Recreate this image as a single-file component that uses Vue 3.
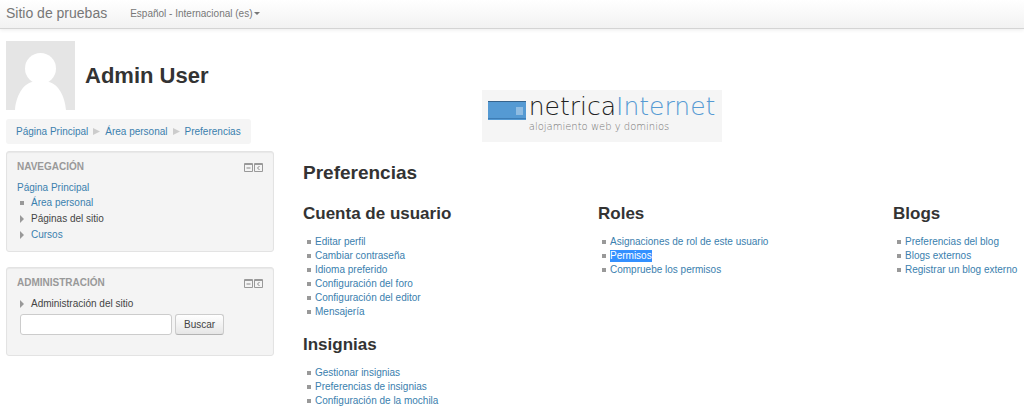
<template>
  <div class="page">
    <header class="navbar">
      <a class="brand" href="#">Sitio de pruebas</a>
      <button type="button" class="lang">Español - Internacional (es) <span class="caret"></span></button>
    </header>

    <div class="content">
      <aside class="sidebar">
        <div class="user">
          <svg class="avatar" viewBox="0 0 69 69" role="img" aria-label="Admin User">
            <rect width="69" height="69" fill="#e5e5e5" />
            <circle cx="34.5" cy="27.5" r="15.5" fill="#fff" />
            <path d="M9 69C10 55 17 43 26 41Q34.500 37 43 41C52 43 59 55 60 69Z" fill="#fff" />
          </svg>
          <h1>Admin User</h1>
        </div>

        <nav class="breadcrumb" aria-label="Ruta">
          <template v-for="(item, index) in breadcrumb" :key="item">
            <svg v-if="index > 0" class="separator" viewBox="0 0 7 7" aria-hidden="true">
              <path d="M0 0L7 3.500L0 7Z" fill="#ccc" />
            </svg>
            <a href="#">{{ item }}</a>
          </template>
        </nav>

        <section v-for="block in blocks" :key="block.title" class="block">
          <div class="block-header">
            <h2>{{ block.title }}</h2>
            <div class="block-actions">
              <button type="button" aria-label="Ocultar bloque">
                <svg viewBox="0 0 9 9">
                  <path d="M0.500 0.500H8.500V8.500H0.500ZM0.500 1.500H8.500" fill="none" stroke="#999" />
                  <path d="M2.500 5H6.500" stroke="#888" />
                </svg>
              </button>
              <button type="button" aria-label="Acoplar bloque">
                <svg viewBox="0 0 9 9">
                  <path d="M0.500 0.500H8.500V8.500H0.500ZM0.500 1.500H8.500" fill="none" stroke="#999" />
                  <path d="M5.500 3L3.500 5L5.500 7" fill="none" stroke="#888" />
                </svg>
              </button>
            </div>
          </div>
          <a v-if="block.root" class="root" href="#">{{ block.root }}</a>
          <ul class="tree">
            <li v-for="item in block.items" :key="item.label">
              <svg class="marker" viewBox="0 0 5 8" aria-hidden="true">
                <path v-if="item.branch" d="M0 0L4 4L0 8Z" fill="#999" />
                <path v-else d="M0 2H4V6H0Z" fill="#999" />
              </svg>
              <a v-if="item.link" href="#">{{ item.label }}</a>
              <span v-else>{{ item.label }}</span>
            </li>
          </ul>
          <form v-if="block.search" class="search" @submit.prevent>
            <input v-model="query" type="text" aria-label="Buscar en los ajustes">
            <button type="submit">Buscar</button>
          </form>
        </section>
      </aside>

      <main class="main">
        <div class="logo">
          <svg class="logo-mark" viewBox="0 0 38 19" aria-hidden="true">
            <rect width="38" height="19" fill="#559ad3" />
            <rect width="38" height="1" fill="#35638c" />
            <rect y="17" width="38" height="1" fill="#3d7db5" />
            <rect x="28" y="6" width="7" height="8" fill="#8fbce2" />
          </svg>
          <div class="logo-text">
            <div class="logo-name">netrica<span>Internet</span></div>
            <div class="logo-tagline">alojamiento web y dominios</div>
          </div>
        </div>

        <h2 class="title">Preferencias</h2>

        <div class="columns">
          <div v-for="(column, index) in columns" :key="index">
            <section v-for="group in column" :key="group.title" class="group">
              <h3>{{ group.title }}</h3>
              <ul>
                <li v-for="link in group.links" :key="link">
                  <a href="#" :class="{ selected: link === selected }">{{ link }}</a>
                </li>
              </ul>
            </section>
          </div>
        </div>
      </main>
    </div>
  </div>
</template>

<script setup>
import { ref } from 'vue'

const query = ref('')
const selected = ref('Permisos')

const breadcrumb = ['Página Principal', 'Área personal', 'Preferencias']

const blocks = [
  {
    title: 'Navegación',
    root: 'Página Principal',
    items: [
      { label: 'Área personal', link: true },
      { label: 'Páginas del sitio', branch: true },
      { label: 'Cursos', link: true, branch: true }
    ]
  },
  {
    title: 'Administración',
    items: [{ label: 'Administración del sitio', branch: true }],
    search: true
  }
]

const columns = [
  [
    {
      title: 'Cuenta de usuario',
      links: [
        'Editar perfil',
        'Cambiar contraseña',
        'Idioma preferido',
        'Configuración del foro',
        'Configuración del editor',
        'Mensajería'
      ]
    },
    {
      title: 'Insignias',
      links: ['Gestionar insignias', 'Preferencias de insignias', 'Configuración de la mochila']
    }
  ],
  [
    {
      title: 'Roles',
      links: ['Asignaciones de rol de este usuario', 'Permisos', 'Compruebe los permisos']
    }
  ],
  [
    {
      title: 'Blogs',
      links: ['Preferencias del blog', 'Blogs externos', 'Registrar un blog externo']
    }
  ]
]
</script>

<style>
body {
  margin: 0;
  background: #fff;
}
</style>

<style scoped>
.page {
  font-family: "Liberation Sans", Arial, sans-serif;
  font-size: 10px;
  line-height: 14px;
  color: #444;
}

h1,
h2,
h3,
ul {
  margin: 0;
  padding: 0;
}

ul {
  list-style: none;
}

a {
  color: #3a80ae;
  text-decoration: none;
}

button {
  font-family: inherit;
  font-size: 10px;
  cursor: pointer;
}

.navbar {
  display: flex;
  align-items: center;
  gap: 23px;
  height: 28px;
  padding: 0 6px;
  background: linear-gradient(#fff, #f2f2f2);
  border-bottom: 1px solid #d4d4d4;
  box-shadow: 0 1px 4px rgba(0, 0, 0, 0.08);
}

.navbar > * {
  margin-bottom: 2px;
}

.brand {
  font-size: 14px;
  color: #777;
}

.lang {
  display: flex;
  align-items: center;
  gap: 2px;
  padding: 0;
  border: 0;
  background: none;
  color: #777;
}

.caret {
  border-top: 3px solid #777;
  border-left: 3px solid transparent;
  border-right: 3px solid transparent;
}

.content {
  display: grid;
  grid-template-columns: 268fr 715fr;
  gap: 29px;
  padding: 12px 6px 8px;
}

.user {
  display: flex;
  align-items: center;
  gap: 10px;
}

.avatar {
  width: 69px;
  height: 69px;
}

h1 {
  font-size: 22px;
  line-height: 28px;
  color: #333;
}

.breadcrumb {
  display: flex;
  align-items: center;
  gap: 5px;
  width: fit-content;
  height: 25px;
  margin: 9px 0 7px;
  padding: 0 10px;
  border-radius: 3px;
  background: #f5f5f5;
}

.separator {
  width: 7px;
  height: 7px;
}

.block {
  margin-bottom: 15px;
  padding: 8px 10px;
  border: 1px solid #e3e3e3;
  border-radius: 3px;
  background: #f4f4f4;
  box-shadow: inset 0 1px 1px rgba(0, 0, 0, 0.05);
}

.block-header {
  display: flex;
  align-items: center;
  justify-content: space-between;
  margin-bottom: 6px;
}

.block-header h2 {
  font-size: 10px;
  text-transform: uppercase;
  color: #999;
}

.block-actions {
  display: flex;
  gap: 1px;
}

.block-actions button {
  padding: 0;
  border: 0;
  background: none;
}

.block-actions svg {
  display: block;
  width: 9px;
  height: 9px;
}

.root {
  display: block;
  margin-top: 7px;
}

.tree li {
  display: flex;
  align-items: center;
  gap: 6px;
  height: 16px;
  padding-left: 3px;
}

.marker {
  width: 5px;
  height: 8px;
}

.search {
  display: flex;
  gap: 3px;
  margin: 2px 0 12px 3px;
}

.search input {
  box-sizing: border-box;
  width: 152px;
  height: 21px;
  padding: 2px 4px;
  border: 1px solid #ccc;
  border-radius: 3px;
  background: #fff;
  font-family: inherit;
  font-size: 10px;
}

.search button {
  height: 21px;
  padding: 0 8px;
  border: 1px solid #ccc;
  border-bottom-color: #b3b3b3;
  border-radius: 3px;
  background: linear-gradient(#fff, #e6e6e6);
  color: #444;
}

.main {
  padding-top: 49px;
}

.logo {
  display: flex;
  gap: 3px;
  box-sizing: border-box;
  width: 240px;
  height: 52px;
  margin-left: 25%;
  padding: 3px 6px;
  background: #f5f5f5;
}

.logo-mark {
  flex: none;
  width: 38px;
  height: 19px;
  margin-top: 8px;
}

.logo-text {
  font-family: "DejaVu Sans Light", "DejaVu Sans", sans-serif;
  font-weight: 200;
  white-space: nowrap;
}

.logo-name {
  font-size: 25px;
  line-height: 28px;
  color: #222;
}

.logo-name span {
  color: #559ad3;
}

.logo-tagline {
  font-size: 10px;
  line-height: 12px;
  color: #777;
}

.title {
  margin: 18px 0 17px;
  font-size: 19px;
  line-height: 26px;
  color: #333;
}

.columns {
  display: grid;
  grid-template-columns: 295fr 295fr 125fr;
}

.group {
  margin-bottom: 15px;
}

.group h3 {
  margin-bottom: 10px;
  font-size: 17px;
  line-height: 22px;
  color: #333;
}

.group li {
  display: flex;
  align-items: center;
  gap: 4px;
  height: 14px;
  padding-left: 4px;
  white-space: nowrap;
}

.group li::before {
  content: "";
  width: 4px;
  height: 4px;
  background: #999;
}

.selected {
  background: #3390ff;
  color: #fff;
  line-height: 12px;
}
</style>
